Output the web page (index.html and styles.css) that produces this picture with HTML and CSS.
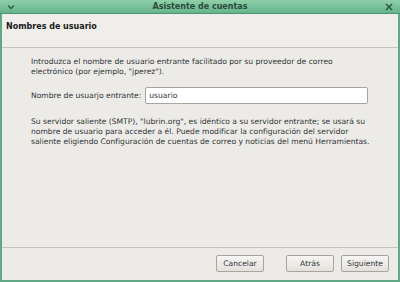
FILE: index.html
```html
<!DOCTYPE html>
<html lang="es">
<head>
  <meta charset="UTF-8" />
  <title>Asistente de cuentas</title>
  <link rel="stylesheet" href="styles.css">
</head>
<body>
  <div class="window">
    <div class="titlebar">
      <svg class="tb-menu" width="8" height="6" viewBox="0 0 8 6"><path d="M1 1.5 L4 4.5 L7 1.5" fill="none" stroke="#2f5a44" stroke-width="1.4"/></svg>
      <span class="tb-title">Asistente de cuentas</span>
      <svg class="tb-close" width="8" height="8" viewBox="0 0 8 8"><path d="M1 1 L7 7 M7 1 L1 7" fill="none" stroke="#2f5a44" stroke-width="1.6"/></svg>
    </div>

    <div class="header">Nombres de usuario</div>

    <div class="content">
      <p class="intro">Introduzca el nombre de usuario entrante facilitado por su proveedor de correo electrónico (por ejemplo, "jperez").</p>
      <div class="field">
        <label for="user">Nombre de usuarjo entrante:</label>
        <input id="user" type="text" value="usuario">
      </div>
      <p class="note">Su servidor saliente (SMTP), "lubrin.org", es idéntico a su servidor entrante; se usará su nombre de usuario para acceder a él. Puede modificar la configuración del servidor saliente eligiendo Configuración de cuentas de correo y noticias del menú Herramientas.</p>
    </div>

    <div class="footer">
      <button>Cancelar</button>
      <div class="nav">
        <button>Atrás</button>
        <button>Siguiente</button>
      </div>
    </div>
  </div>
</body>
</html>
```

FILE: styles.css
```css
* {
  box-sizing: border-box;
  margin: 0;
  padding: 0;
}

body {
  width: 400px;
  height: 282px;
  font-family: 'DejaVu Sans', sans-serif;
  font-size: 7.6px;
  color: #2e3436;
  background: #5ea984;
}

.window {
  display: flex;
  flex-direction: column;
  height: 282px;
  border: 2px solid #5ea984;
  border-top: none;
  background: #edebe7;
}

.titlebar {
  display: flex;
  align-items: center;
  height: 14px;
  margin: 0 -2px;
  padding: 0 7px;
  background: linear-gradient(#8fcfaa, #66b48b);
  border-bottom: 1px solid #4f9472;
}

.tb-title {
  flex: 1;
  text-align: center;
  font-weight: bold;
  font-size: 8px;
  color: #2c4b3b;
}

.header {
  height: 34px;
  padding: 8px 4px;
  font-weight: bold;
  font-size: 8px;
  color: #1a1a1a;
  background: #f0eeea;
  border-bottom: 1px solid #c6c2bc;
}

.content {
  flex: 1;
  padding: 9px 18px 9px 29px;
  line-height: 10px;
}

.intro {
  max-width: 310px;
}

.field {
  display: flex;
  align-items: center;
  margin: 10px 0 13px;
  gap: 4px;
}

.field label {
  white-space: nowrap;
}

.field input {
  width: 223px;
  height: 17px;
  padding: 0 3px;
  font-family: inherit;
  font-size: 7.6px;
  color: #2e3436;
  background: #fff;
  border: 1px solid #a8a49e;
  border-radius: 2px;
  outline: none;
}

.footer {
  display: flex;
  justify-content: flex-end;
  align-items: center;
  gap: 22px;
  height: 33px;
  padding: 0 9px 1px;
  border-top: 1px solid #c6c2bc;
}

.nav {
  display: flex;
  gap: 7px;
}

button {
  width: 48px;
  height: 17px;
  font-family: inherit;
  font-size: 7.6px;
  color: #2e3436;
  background: linear-gradient(#f7f6f4, #e4e1dc);
  border: 1px solid #a8a49e;
  border-radius: 2px;
}
```
